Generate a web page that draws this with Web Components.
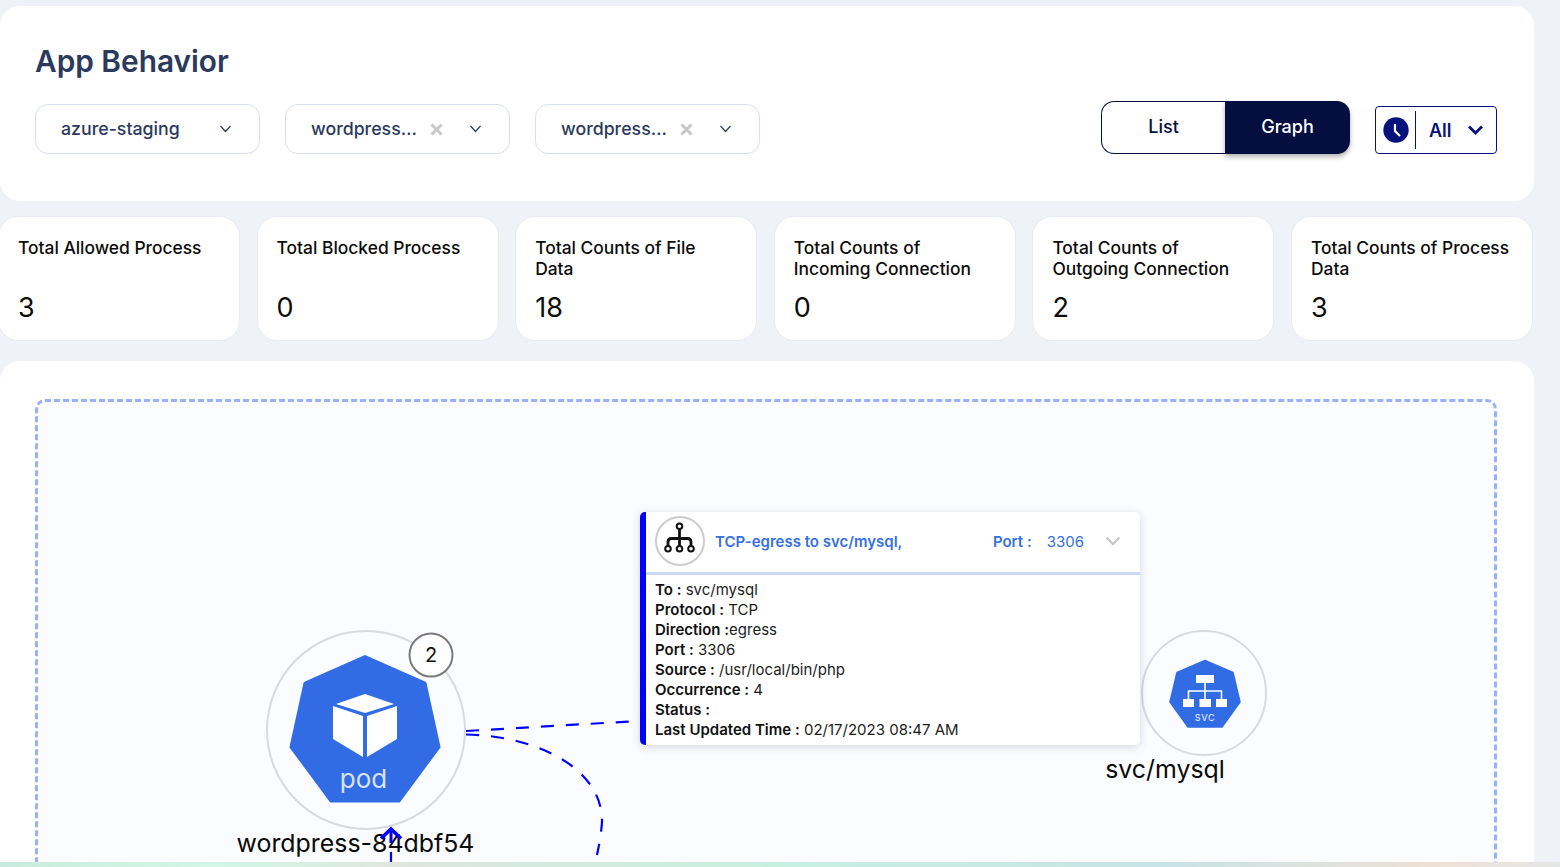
<!DOCTYPE html>
<html lang="en">
<head>
<meta charset="utf-8">
<title>App Behavior</title>
<style>
    html, body { margin: 0; height: 867px; overflow: hidden; }
    body { background: #eff2f7; font-family: Inter, "Liberation Sans", sans-serif; }
</style>
</head>
<body>

<app-page>
    <header-panel>
        <filter-select slot="filters">azure-staging</filter-select>
        <filter-select slot="filters" clearable>wordpress…</filter-select>
        <filter-select slot="filters" clearable>wordpress…</filter-select>
        <view-toggle slot="actions"></view-toggle>
        <time-filter slot="actions"></time-filter>
    </header-panel>
    <stat-row>
        <stat-card value="3">Total Allowed Process</stat-card>
        <stat-card value="0">Total Blocked Process</stat-card>
        <stat-card value="18">Total Counts of File Data</stat-card>
        <stat-card value="0">Total Counts of Incoming Connection</stat-card>
        <stat-card value="2">Total Counts of Outgoing Connection</stat-card>
        <stat-card value="3">Total Counts of Process Data</stat-card>
    </stat-row>
    <graph-panel></graph-panel>
</app-page>
<bottom-strip></bottom-strip>

<script type="module">
    // small helper, every element is a shadow root + a string of markup
    class Base extends HTMLElement {
        constructor() {
            super();
            this.attachShadow({mode: 'open'});
        }
        connectedCallback() {
            this.shadowRoot.innerHTML = this.render();
        }
    }

    class AppPage extends Base {
        render() {
            return `<style>
                :host { display: flex; flex-direction: column; width: 1534px; height: 867px; box-sizing: border-box; padding-top: 6px; overflow: hidden; }
            </style><slot></slot>`;
        }
    }

    class HeaderPanel extends Base {
        render() {
            return `<style>
                :host { display: block; flex: none; height: 195px; box-sizing: border-box; background: #fff;
                        border-radius: 20px; padding: 37px 37px 0 35px; }
                h1 { margin: 0; font: 600 29.8px/36px Inter, sans-serif; color: #2b3a5c; }
                .bar { display: flex; justify-content: space-between; margin-top: 22px; }
                .left { display: flex; gap: 25px; padding-top: 3px; }
                .right { display: flex; gap: 25px; align-items: flex-start; }
            </style>
            <h1>App Behavior</h1>
            <div class="bar">
                <div class="left"><slot name="filters"></slot></div>
                <div class="right"><slot name="actions"></slot></div>
            </div>`;
        }
    }

    class FilterSelect extends Base {
        render() {
            let clear = this.hasAttribute('clearable')
                ? `<svg class="x" width="13" height="13" viewBox="0 0 13 13"><path d="M1.5 1.5l10 10M11.5 1.5l-10 10" stroke="#c8c8c8" stroke-width="3" fill="none"/></svg>`
                : '';
            return `<style>
                :host { display: flex; align-items: center; width: 225px; height: 50px; box-sizing: border-box;
                        border: 1px solid #d9dfef; border-radius: 13px; padding-left: 25px; background: #fff;
                        font: 500 17.75px Inter, sans-serif; color: #2b3a5c; }
                .txt { flex: 1; white-space: nowrap; padding-bottom: 2px; }
                .x { margin-right: 26px; }
                .c { margin-right: 27px; }
            </style>
            <span class="txt"><slot></slot></span>${clear}
            <svg class="c" width="13" height="8" viewBox="0 0 13 8"><path d="M1.5 1l5 5.5 5-5.5" stroke="#2b3a5c" stroke-width="1.2" fill="none"/></svg>`;
        }
    }

    class ViewToggle extends Base {
        render() {
            return `<style>
                :host { display: flex; width: 249px; height: 53px; font: 500 18px Inter, sans-serif; }
                div { display: flex; align-items: center; justify-content: center; box-sizing: border-box; padding-bottom: 3px; }
                .list { width: 124px; color: #05103f; background: #fff; border: 1px solid #05103f; border-right: 0; border-radius: 13px 0 0 13px; }
                .graph { width: 125px; color: #fff; background: #040f3f; border-radius: 0 13px 13px 0; box-shadow: 0 3px 5px rgba(0,0,0,.3); }
            </style>
            <div class="list">List</div><div class="graph">Graph</div>`;
        }
    }

    class TimeFilter extends Base {
        render() {
            return `<style>
                :host { display: flex; align-items: center; width: 122px; height: 48px; margin-top: 5px; box-sizing: border-box;
                        border: 1px solid #07137a; border-radius: 4px; font: 600 18px Inter, sans-serif; color: #07137a; }
                svg { display: block; }
                .clock { margin-left: 7px; }
                .sep { width: 1px; height: 38px; background: #07137a; margin: 0 13px 0 6px; }
                .all { flex: 1; }
                .c { margin-right: 13px; }
            </style>
            <svg class="clock" width="26" height="26" viewBox="0 0 26 26"><circle cx="13" cy="13" r="12.7" fill="#07137a"/><path d="M12 7v7l5 5" stroke="#fff" stroke-width="2.2" fill="none"/></svg>
            <span class="sep"></span><span class="all">All</span>
            <svg class="c" width="15" height="10" viewBox="0 0 15 10"><path d="M1 1.500l6.500 6.500 6.500-6.500" stroke="#07137a" stroke-width="2.800" fill="none"/></svg>`;
        }
    }

    class StatRow extends Base {
        render() {
            return `<style>
                :host { display: grid; flex: none; grid-template-columns: repeat(6, 242px); gap: 16.6px; margin: 15px 0 0 -2px; }
            </style><slot></slot>`;
        }
    }

    class StatCard extends Base {
        render() {
            return `<style>
                :host { display: block; height: 125px; box-sizing: border-box; background: #fff; border: 1px solid #e8ebf2;
                        border-radius: 20px; padding: 20px 18px 0 19px; color: #0c0c0c; }
                .t { font: 500 17.4px/21px Inter, sans-serif; height: 42px; }
                .v { font: 400 27px/32px Inter, sans-serif; margin-top: 13px; }
            </style>
            <div class="t"><slot></slot></div>
            <div class="v">${this.getAttribute('value')}</div>`;
        }
    }

    class GraphNode extends Base {
        render() {
            let d = +this.getAttribute('size');
            return `<style>
                :host { display: block; position: absolute; width: ${d}px; height: ${d}px; box-sizing: border-box;
                        border: 2px solid #d9dadf; border-radius: 50%; }
                .lbl { position: absolute; top: 100%; left: 50%; white-space: nowrap; transform: translateX(-50%);
                       font: 400 24.9px/30px Inter, sans-serif; color: #0a0a0a; }
            </style>
            <slot></slot>
            <div class="lbl" style="margin-left:${this.getAttribute('shift') || 0}px; margin-top:${this.getAttribute('gap') || 0}px">${this.getAttribute('label')}</div>`;
        }
    }

    class EdgePopup extends Base {
        render() {
            let rows = [
                ['To :', ' svc/mysql'],
                ['Protocol :', ' TCP'],
                ['Direction :', 'egress'],
                ['Port :', ' 3306'],
                ['Source :', ' /usr/local/bin/php'],
                ['Occurrence :', ' 4'],
                ['Status :', ''],
                ['Last Updated Time :', ' 02/17/2023 08:47 AM']
            ];
            return `<style>
                :host { display: block; position: absolute; left: 602px; top: 110px; width: 500px; height: 233px; box-sizing: border-box;
                        background: #fff; border-left: 6px solid #0000ff; border-radius: 5px;
                        box-shadow: 0 2px 10px rgba(40,50,90,.18); font-family: Inter, sans-serif; color: #1c1c1c; }
                .head { display: flex; align-items: center; height: 63px; box-sizing: border-box; padding: 0 19px 2px 9px;
                        border-bottom: 3px solid #cbd9fa; color: #3570e4; font-size: 15px; }
                .ic { width: 50px; height: 50px; box-sizing: border-box; border: 2px solid #ccc; border-radius: 50%; display: flex; align-items: center; justify-content: center; }
                .name { font-weight: 600; margin-left: 10px; flex: 1; }
                .port { font-weight: 600; }
                .num { margin: 0 21px 0 15px; }
                .body { padding: 5px 9px 0; font-size: 15px; line-height: 20px; white-space: pre; }
                b { font-weight: 600; color: #111; }
            </style>
            <div class="head">
                <div class="ic"><svg width="32" height="40" viewBox="0 0 32 40" fill="none" stroke="#111" stroke-width="2"><circle cx="15.500" cy="5.200" r="2.800"/><path d="M15.500 8V25M4 25v-4q0-3.500 3.500-3.500h16q3.500 0 3.500 3.500v4" stroke-width="2.800"/><circle cx="4" cy="27.800" r="2.800"/><circle cx="15.500" cy="27.800" r="2.800"/><circle cx="27" cy="27.800" r="2.800"/></svg></div>
                <span class="name">TCP-egress to svc/mysql,</span>
                <span class="port">Port :</span><span class="num">3306</span>
                <svg width="16" height="10" viewBox="0 0 16 10"><path d="M1.5 1.5L8 8l6.5-6.5" stroke="#c8c8c8" stroke-width="2.4" fill="none"/></svg>
            </div>
            <div class="body">${rows.map(r => `<div><b>${r[0]}</b>${r[1]}</div>`).join('')}</div>`;
        }
    }

    class GraphPanel extends Base {
        render() {
            return `<style>
                :host { display: block; flex: none; height: 506px; box-sizing: border-box; margin-top: 20px; background: #fff;
                        border-radius: 20px 20px 0 0; padding: 38px 37px 0 35px; overflow: hidden; }
                .canvas { position: relative; height: 490px; box-sizing: border-box; background: #fbfcff;
                          border: 3px dashed #9ab0fb; border-radius: 10px; }
                .edges { position: absolute; left: -3px; top: -3px; }
                graph-node svg { position: absolute; left: 0; top: 0; }
            </style>
            <div class="canvas">
                <graph-node size="200" label="wordpress-84dbf54" gap="0" shift="-10.500" style="left:228px;top:228px">
                    <svg width="196" height="196" viewBox="268 632 196 196">
                        <path d="M365 656.500 425 683 439 747 399 801H331L291 747 305 683Z" fill="#326ce5" stroke="#326ce5" stroke-width="3" stroke-linejoin="round"/>
                        <path d="M365 694l29 10-29 9-29-9zM333 706l30 10v41l-30-18zM397 706l-30 10v41l30-18z" fill="#fff"/>
                        <text x="363.500" y="787.500" text-anchor="middle" fill="#fff" fill-opacity=".82" font-family="Inter, sans-serif" font-size="26">pod</text>
                    </svg>
                </graph-node>
                <graph-node size="126" label="svc/mysql" gap="0" shift="-39" style="left:1103px;top:228px">
                    <svg width="122" height="122" viewBox="1143 632 122 122">
                        <path d="M1205 660.500 1233 672.500 1240 702 1222 727H1188L1170 702 1177 672.500Z" fill="#326ce5" stroke="#326ce5" stroke-width="1.500" stroke-linejoin="round"/>
                        <path d="M1196 675h18v8h-18zM1183 699h11v8h-11zM1199.500 699h11.500v8h-11.500zM1216 699h11v8h-11z" fill="#fff"/>
                        <path d="M1205 683v16M1188.500 699v-8h33v8" stroke="#fff" stroke-width="1.600" fill="none"/>
                        <text x="1205" y="720.500" text-anchor="middle" fill="#fff" fill-opacity=".85" font-family="Inter, sans-serif" font-size="9" font-weight="500" letter-spacing=".7">SVC</text>
                    </svg>
                </graph-node>
                <svg class="edges" width="1462" height="468" viewBox="35 399 1462 468" fill="none" stroke="#0000ff" stroke-width="2.200">
                    <path d="M466 731 630 721.500" stroke-dasharray="13 12"/>
                    <path d="M466 734.500C540 736 603 770 602 822 601 836 599 845 597 855" stroke-dasharray="13 12"/>
                    <path d="M391 862V852"/>
                    <path d="M381 838.500 391 829 401 838.500" stroke-width="3.500"/>
                    <path d="M391 830V843" stroke-width="3"/>
                    <circle cx="431" cy="655" r="21.500" fill="#fff" stroke="#7a7a7a" stroke-width="2"/>
                    <text x="431" y="662" text-anchor="middle" fill="#111" stroke="none" font-family="Inter, sans-serif" font-size="20">2</text>
                </svg>
                <edge-popup></edge-popup>
            </div>`;
        }
    }

    class BottomStrip extends Base {
        render() {
            return `<style>
                :host { display: block; position: fixed; left: 0; right: 0; bottom: 0; height: 5px;
                        background: linear-gradient(90deg, #c9ebdf 0, #d1f7e6 14%, #dfe6de 25%, #c6efe0 50%, #c8e3e6 75%, #efe0d4 92%, #e4e6e6 100%); }
            </style>`;
        }
    }

    customElements.define('app-page', AppPage);
    customElements.define('header-panel', HeaderPanel);
    customElements.define('filter-select', FilterSelect);
    customElements.define('view-toggle', ViewToggle);
    customElements.define('time-filter', TimeFilter);
    customElements.define('stat-row', StatRow);
    customElements.define('stat-card', StatCard);
    customElements.define('graph-node', GraphNode);
    customElements.define('edge-popup', EdgePopup);
    customElements.define('graph-panel', GraphPanel);
    customElements.define('bottom-strip', BottomStrip);
</script>
</body>
</html>
